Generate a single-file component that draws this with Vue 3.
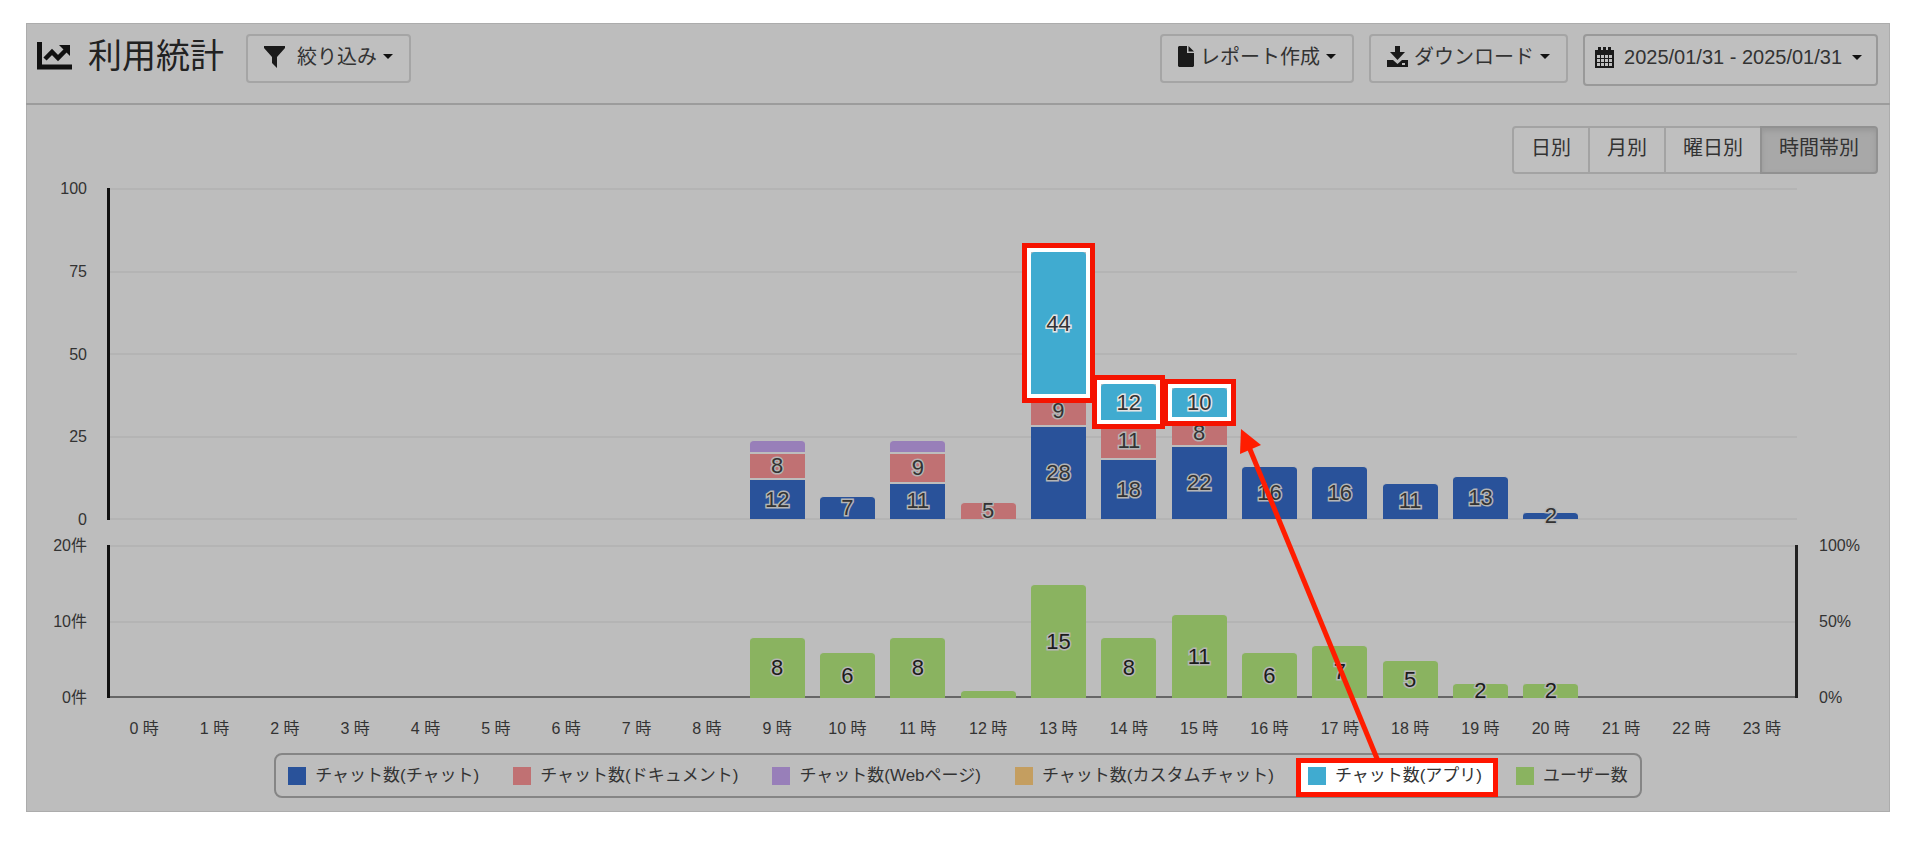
<script setup>
import { ref } from 'vue';

const currentView = ref('時間帯別');
const views = ['日別', '月別', '曜日別', '時間帯別'];

const chatTicks = ['100', '75', '50', '25', '0'];
const userTicks = ['20件', '10件', '0件'];
const rateTicks = ['100%', '50%', '0%'];

const chatMax = 100;
const userMax = 20;

// chat, document, web, app, users
const values = {
  9: [12, 8, 4, 0, 8],
  10: [7, 0, 0, 0, 6],
  11: [11, 9, 4, 0, 8],
  12: [0, 5, 0, 0, 1],
  13: [28, 9, 0, 44, 15],
  14: [18, 11, 0, 12, 8],
  15: [22, 8, 0, 10, 11],
  16: [16, 0, 0, 0, 6],
  17: [16, 0, 0, 0, 7],
  18: [11, 0, 0, 0, 5],
  19: [13, 0, 0, 0, 2],
  20: [2, 0, 0, 0, 2],
};
const types = ['chat', 'document', 'web', 'app'];

const hours = Array.from({ length: 24 }, (_, hour) => {
  const row = values[hour] || [0, 0, 0, 0, 0];
  return {
    hour,
    segments: types
      .map((type, i) => ({ type, value: row[i] }))
      .filter((segment) => segment.value > 0),
    users: row[4],
  };
});

const legend = [
  { type: 'chat', label: 'チャット数(チャット)' },
  { type: 'document', label: 'チャット数(ドキュメント)' },
  { type: 'web', label: 'チャット数(Webページ)' },
  { type: 'custom', label: 'チャット数(カスタムチャット)' },
  { type: 'app', label: 'チャット数(アプリ)', marked: true },
  { type: 'users', label: 'ユーザー数' },
];
</script>

<template>
  <main class="panel">
    <header class="header">
      <svg class="title-icon" viewBox="0 0 36 28" aria-hidden="true">
        <path d="M2.500 0V25H35" fill="none" stroke="#111" stroke-width="5" />
        <path d="M8 17L15 10L21 16L29 8" fill="none" stroke="#111" stroke-width="4.500" />
        <path d="M22 3H33V14Z" fill="#111" />
      </svg>
      <h1>利用統計</h1>
      <button type="button" class="btn filter-btn">
        <svg width="21" height="22" viewBox="0 0 21 22" aria-hidden="true">
          <path d="M0 0H21V2L13 11V22L8 17V11L0 2Z" />
        </svg>
        <span>絞り込み</span>
        <i class="caret"></i>
      </button>

      <div class="actions">
        <button type="button" class="btn">
          <svg width="16" height="21" viewBox="0 0 16 21" aria-hidden="true">
            <path d="M1 0H9V7H16V20L15 21H1L0 20V1Z" />
            <path d="M10.500 0L16 5.500H10.500Z" />
          </svg>
          <span>レポート作成</span>
          <i class="caret"></i>
        </button>
        <button type="button" class="btn">
          <svg width="21" height="21" viewBox="0 0 21 21" aria-hidden="true">
            <path d="M8 0H13V6H18L10.500 14L3 6H8Z" />
            <path d="M0 14H6L10.500 18L15 14H21V21H0ZM15 17V19H18V17Z" fill-rule="evenodd" />
          </svg>
          <span>ダウンロード</span>
          <i class="caret"></i>
        </button>
        <button type="button" class="btn date-btn">
          <svg width="19" height="21" viewBox="0 0 19 21" aria-hidden="true">
            <path
              fill-rule="evenodd"
              d="M3 0H6V3H8V0H11V3H13V0H16V3H19V21H0V3H3ZM2 8V11H5V8ZM6 8V11H9V8ZM10 8V11H13V8ZM14 8V11H17V8ZM2 12V15H5V12ZM6 12V15H9V12ZM10 12V15H13V12ZM14 12V15H17V12ZM2 16V19H5V16ZM6 16V19H9V16ZM10 16V19H13V16ZM14 16V19H17V16Z"
            />
          </svg>
          <span>2025/01/31 - 2025/01/31</span>
          <i class="caret"></i>
        </button>
      </div>
    </header>

    <div class="view-bar">
      <div class="view-group">
        <button
          v-for="view in views"
          :key="view"
          type="button"
          :class="{ active: currentView === view }"
          :aria-pressed="currentView === view"
          @click="currentView = view"
        >
          {{ view }}
        </button>
      </div>
    </div>

    <section class="chart">
      <div class="axis chat-axis">
        <span v-for="tick in chatTicks" :key="tick">{{ tick }}</span>
      </div>
      <div class="plot chat-plot">
        <div class="grid-lines">
          <i v-for="tick in chatTicks" :key="tick"></i>
        </div>
        <div v-for="item in hours" :key="item.hour" class="column">
          <div
            v-for="segment in item.segments"
            :key="segment.type"
            class="bar"
            :class="segment.type"
            :style="{ height: (segment.value / chatMax) * 100 + '%' }"
          >
            <span v-if="segment.type !== 'web'">{{ segment.value }}</span>
          </div>
        </div>
      </div>
      <div></div>

      <div class="axis">
        <span v-for="tick in userTicks" :key="tick">{{ tick }}</span>
      </div>
      <div class="plot user-plot">
        <div class="grid-lines">
          <i v-for="tick in userTicks" :key="tick"></i>
        </div>
        <div v-for="item in hours" :key="item.hour" class="column">
          <div
            v-if="item.users"
            class="bar users"
            :style="{ height: (item.users / userMax) * 100 + '%' }"
          >
            <span v-if="item.users > 1">{{ item.users }}</span>
          </div>
        </div>
      </div>
      <div class="axis rate">
        <span v-for="tick in rateTicks" :key="tick">{{ tick }}</span>
      </div>

      <div class="hours">
        <span v-for="item in hours" :key="item.hour">{{ item.hour }} 時</span>
      </div>
    </section>

    <!-- Arrow from the app legend entry up to the app bars -->
    <svg class="arrow" viewBox="0 0 1864 789" preserveAspectRatio="none" aria-hidden="true">
      <path d="M1352 738L1223 424" fill="none" stroke="#ff1d00" stroke-width="5" />
      <path d="M1215 406L1235 422L1214 431Z" fill="#ff1d00" />
    </svg>

    <ul class="legend">
      <li v-for="item in legend" :key="item.type" :class="{ marked: item.marked }">
        <i class="swatch" :class="item.type"></i>
        <span>{{ item.label }}</span>
      </li>
    </ul>
  </main>
</template>

<style>
body {
  background: #fff;
}
</style>

<style scoped>
* {
  box-sizing: border-box;
}

.panel {
  position: relative;
  margin: 23px 30px 30px 26px;
  padding-bottom: 14px;
  background: #bdbdbd;
  box-shadow: inset 0 0 0 1px #acacac;
  color: #333;
  font-family: "Liberation Sans", "Noto Sans CJK JP", sans-serif;
}

.header {
  display: flex;
  align-items: flex-start;
  padding: 11px 12px 17px 11px;
  border-bottom: 2px solid #9c9c9c;
}

.title-icon {
  width: 36px;
  height: 28px;
  margin: 8px 15px 0 0;
}

h1 {
  margin: 0 22px 0 0;
  color: #222;
  font-size: 34px;
  font-weight: 400;
  line-height: 45px;
}

.btn {
  display: flex;
  align-items: center;
  gap: 6px;
  height: 49px;
  padding: 0 16px 4px;
  border: 2px solid #a5a5a5;
  border-radius: 4px;
  background: #bfbfbf;
  color: #333;
  font-family: inherit;
  font-size: 20px;
  line-height: 24px;
  white-space: nowrap;
  cursor: pointer;
}

.btn svg {
  fill: #1a1a1a;
}

.filter-btn svg {
  margin-right: 6px;
}

.date-btn {
  gap: 10px;
  height: 52px;
  padding: 0 14px 6px 10px;
  border-color: #999;
}

.caret {
  border-top: 5px solid #111;
  border-left: 5px solid transparent;
  border-right: 5px solid transparent;
}

.actions {
  display: flex;
  gap: 15px;
  margin-left: auto;
}

.view-bar {
  display: flex;
  justify-content: flex-end;
  padding: 21px 12px 14px;
}

.view-group {
  display: flex;
}

.view-group button {
  height: 48px;
  margin-left: -2px;
  padding: 0 17px 4px;
  border: 2px solid #a3a3a3;
  background: #bfbfbf;
  color: #333;
  font-family: inherit;
  font-size: 20px;
  line-height: 24px;
  cursor: pointer;
}

.view-group button:first-child {
  border-radius: 4px 0 0 4px;
}

.view-group button:last-child {
  border-radius: 0 4px 4px 0;
}

.view-group .active {
  border-color: #919191;
  background: #a8a8a8;
  box-shadow: inset 0 3px 5px #989898;
}

.chart {
  display: grid;
  grid-template-columns: 83px 1fr 93px;
  font-size: 16px;
  line-height: 20px;
}

.axis {
  display: flex;
  flex-direction: column;
  justify-content: space-between;
  margin: -9px 0 -11px;
  padding-right: 22px;
  text-align: right;
}

.chat-axis {
  margin-bottom: 15px;
}

.rate {
  padding: 0 0 0 22px;
  text-align: left;
}

.plot {
  position: relative;
  display: grid;
  grid-template-columns: repeat(24, 1fr);
}

.plot::before {
  content: "";
  position: absolute;
  z-index: 1;
  top: 0;
  bottom: -1px;
  left: -2px;
  width: 3px;
  background: #111;
}

.chat-plot {
  height: 331px;
  margin-bottom: 26px;
}

.user-plot {
  height: 152px;
}

.user-plot::after {
  content: "";
  position: absolute;
  top: 0;
  bottom: -1px;
  right: -1px;
  width: 3px;
  background: #222;
}

.grid-lines {
  position: absolute;
  inset: 0 0 -1px;
  display: flex;
  flex-direction: column;
  justify-content: space-between;
}

.grid-lines i {
  height: 2px;
  background: #b4b4b4;
}

.user-plot .grid-lines i:last-child {
  background: #666;
}

.column {
  position: relative;
  display: flex;
  flex-direction: column-reverse;
  align-items: center;
  min-height: 0;
}

.bar {
  position: relative;
  display: flex;
  flex-shrink: 0;
  align-items: center;
  justify-content: center;
  width: 78%;
  border-top: 1px solid #bdbdbd;
  border-bottom: 1px solid #bdbdbd;
}

.bar:first-child {
  border-bottom: 0;
}

.bar:last-child {
  border-radius: 4px 4px 0 0;
}

.bar.users {
  top: 1px;
}

.bar span {
  position: relative;
  color: #333;
  font-size: 22px;
  line-height: 0;
  -webkit-text-stroke: 3px #b5b5b5;
  paint-order: stroke fill;
}

.bar.app span {
  -webkit-text-stroke-color: #e4e4e4;
}

.bar.users span {
  color: #1c1c1c;
}

.bar.app::before {
  content: "";
  position: absolute;
  inset: -9px -9px -7px;
  border: 5px solid #f51300;
  box-shadow: inset 0 0 0 4px #fff;
}

.chat {
  background: #29529a;
}

.document {
  background: #c07173;
}

.web {
  background: #987fb9;
}

.custom {
  background: #c49e60;
}

.app {
  background: #40abd0;
}

.users {
  background: #8ab360;
}

.hours {
  grid-column: 2;
  display: grid;
  grid-template-columns: repeat(24, 1fr);
  margin-top: 22px;
  text-align: center;
  white-space: nowrap;
}

.arrow {
  position: absolute;
  inset: 0;
  width: 100%;
  height: 100%;
  pointer-events: none;
}

.legend {
  display: flex;
  gap: 34px;
  width: fit-content;
  margin: 14px auto 0;
  padding: 0 12px;
  border: 2px solid #858585;
  border-radius: 8px;
  font-size: 17px;
  line-height: 41px;
  list-style: none;
  white-space: nowrap;
}

.legend li {
  position: relative;
  display: flex;
  align-items: center;
  gap: 9px;
}

.legend li > * {
  position: relative;
}

.legend .marked::before {
  content: "";
  position: absolute;
  inset: 3px -16px -1px -12px;
  border: 5px solid #ff1500;
  background: #fff;
}

.swatch {
  width: 18px;
  height: 18px;
}
</style>
